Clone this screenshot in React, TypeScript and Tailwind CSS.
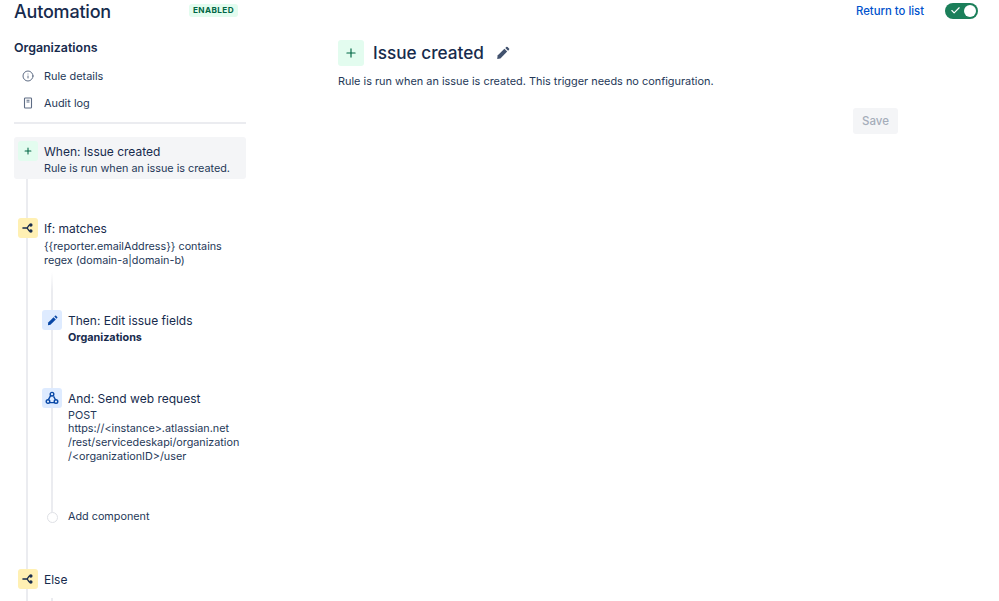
import { Check, Info, Plus } from 'lucide-react'
import { ReactNode } from 'react'

const fontStack = { fontFamily: 'Inter, "Liberation Sans", sans-serif' }

function BranchIcon() {
  return (
    <svg width="12" height="12" viewBox="0 0 14 14" fill="none" stroke="#172b4d" strokeWidth="1.5">
      <path d="M0.5 7h5M5.5 7c1.5 0 1.8-3.5 3.5-3.5M5.5 7c1.5 0 1.8 3.5 3.5 3.5" />
      <circle cx="10.3" cy="3.5" r="1.3" fill="#172b4d" />
      <circle cx="10.3" cy="10.5" r="1.3" fill="#172b4d" />
    </svg>
  )
}

function WebhookIcon() {
  return (
    <svg width="14" height="14" viewBox="0 0 14 14" fill="none" stroke="#0747a6" strokeWidth="1.4">
      <circle cx="7" cy="3.2" r="1.8" />
      <circle cx="3" cy="10.6" r="1.8" />
      <circle cx="11" cy="10.6" r="1.8" />
      <path d="M5.6 4.6 3.4 8.6M5 11.6h4.2M8.6 5.4l2 3.6" />
    </svg>
  )
}

function PencilIcon({ size, color }: { size: number; color: string }) {
  return (
    <svg width={size} height={size} viewBox="0 0 14 14" fill={color}>
      <path d="M1.6 9.6 8.4 2.8l2.8 2.8-6.8 6.8-3.2.6z" />
      <path d="M9.3 1.9l.9-.9a1 1 0 0 1 1.4 0l1.4 1.4a1 1 0 0 1 0 1.4l-.9.9z" />
    </svg>
  )
}

function Step({ icon, color, title, children }: { icon: ReactNode; color: string; title: string; children?: ReactNode }) {
  return (
    <div className="relative flex gap-[6px]">
      <div className={`z-10 flex h-5 w-5 shrink-0 items-center justify-center rounded-[3px] ${color}`}>{icon}</div>
      <div className="min-w-0 pt-[1px]">
        <div className="text-[12px] leading-5 text-[#172b4d]">{title}</div>
        {children && <div className="whitespace-nowrap text-[10.8px] leading-[13.6px] text-[#253858]">{children}</div>}
      </div>
    </div>
  )
}

export default function App() {
  return (
    <div className="h-[601px] w-[999px] overflow-hidden bg-white" style={fontStack}>
      <header className="flex h-[24px] items-start justify-between pl-[14px] pr-[21px] pt-[1px]">
        <div className="flex w-[224px] items-start justify-between">
          <h1 className="text-[18px] font-medium leading-[22px] tracking-[-0.2px] text-[#172b4d]">Automation</h1>
          <span className="mt-[3px] rounded-[3px] bg-[#e3fcef] px-[4px] text-[8.2px] font-bold leading-[13px] tracking-[0.4px] text-[#006644]">ENABLED</span>
        </div>
        <div className="mt-[1px] flex items-center gap-[21px]">
          <a className="pt-[1px] text-[11.3px] font-medium text-[#0052cc]">Return to list</a>
          <div className="flex h-4 w-[33px] items-center justify-between rounded-full bg-[#1b7f5a] pl-[5px] pr-[2px]">
            <Check size={11} color="white" strokeWidth={2.5} />
            <div className="h-3 w-3 rounded-full bg-white" />
          </div>
        </div>
      </header>

      <div className="flex">
        <aside className="ml-[14px] w-[232px] shrink-0">
          <h2 className="mt-[15px] text-[12.4px] font-semibold leading-[18px] text-[#172b4d]">Organizations</h2>
          <nav className="mt-[11px] flex flex-col gap-[11px] text-[10.9px] text-[#253858]">
            <div className="flex h-4 items-center gap-[10px] pl-[8px]">
              <Info size={12} color="#5e6c84" />
              <span>Rule details</span>
            </div>
            <div className="flex h-4 items-center gap-[10px] pl-[8px]">
              <svg width="12" height="12" viewBox="0 0 12 12" fill="none" stroke="#5e6c84" strokeWidth="1.1">
                <rect x="2.5" y="1" width="7" height="10" rx="0.8" />
                <path d="M4.5 3.2h3M4.5 5h3" />
              </svg>
              <span>Audit log</span>
            </div>
          </nav>
          <div className="mt-[11px] h-[2px] bg-[#ebecf0]" />

          <div className="relative mt-[13px]">
            <div className="absolute bottom-0 left-[12px] top-0 w-[2px] bg-[#ebecf0]" />
            <div className="relative h-[42px] rounded-[3px] bg-[#f4f5f7] pl-[4px] pt-[4px]">
              <Step icon={<Plus size={10} color="#006644" strokeWidth={2.5} />} color="bg-[#e3fcef]" title="When: Issue created">
                Rule is run when an issue is created.
              </Step>
            </div>

            <div className="ml-[4px] mt-[39px]">
              <Step icon={<BranchIcon />} color="bg-[#fff0b3]" title="If: matches">
                <div className="pt-[1px]">
                  {'{{reporter.emailAddress}} contains'}
                  <br />
                  regex (domain-a|domain-b)
                </div>
              </Step>
            </div>

            <div className="relative ml-[28px] mt-[43px]">
              <div className="absolute bottom-[15px] left-[9px] top-[-38px] w-[2px] bg-gradient-to-b from-white to-[#ebecf0] to-[8%]" />
              <Step icon={<PencilIcon size={11} color="#0747a6" />} color="bg-[#deebff]" title="Then: Edit issue fields">
                <span className="font-bold text-[#172b4d]">Organizations</span>
              </Step>
              <div className="mt-[43px]">
                <Step icon={<WebhookIcon />} color="bg-[#deebff]" title="And: Send web request">
                  POST
                  <br />
                  https://&lt;instance&gt;.atlassian.net
                  <br />
                  /rest/servicedeskapi/organization
                  <br />
                  /&lt;organizationID&gt;/user
                </Step>
              </div>
              <div className="relative mt-[44px] flex h-5 items-center gap-[6px]">
                <div className="flex w-5 justify-center">
                  <div className="h-[11px] w-[11px] rounded-full border border-[#dfe1e6] bg-white" />
                </div>
                <span className="text-[10.8px] text-[#253858]">Add component</span>
              </div>
            </div>

            <div className="relative ml-[4px] mt-[42px] h-[60px]">
              <div className="absolute bottom-0 left-[33px] top-[29px] w-[2px] bg-[#ebecf0]" />
              <Step icon={<BranchIcon />} color="bg-[#fff0b3]" title="Else" />
            </div>
          </div>
        </aside>

        <main className="ml-[92px] w-[560px]">
          <div className="mt-[16px] flex items-center">
            <div className="flex h-[26px] w-[26px] items-center justify-center rounded-[3px] bg-[#e3fcef]">
              <Plus size={14} color="#006644" strokeWidth={2} />
            </div>
            <h2 className="ml-[9px] text-[17.2px] font-medium leading-[26px] text-[#172b4d]">Issue created</h2>
            <span className="ml-[12px]"><PencilIcon size={14} color="#42526e" /></span>
          </div>
          <p className="mt-[7px] text-[10.92px] leading-4 text-[#253858]">Rule is run when an issue is created. This trigger needs no configuration.</p>
          <div className="mt-[19px] flex justify-end">
            <button className="h-[26px] w-[45px] rounded-[3px] bg-[#f4f5f7] pt-[2px] text-[11.5px] font-medium text-[#a5adba]">Save</button>
          </div>
        </main>
      </div>
    </div>
  )
}
